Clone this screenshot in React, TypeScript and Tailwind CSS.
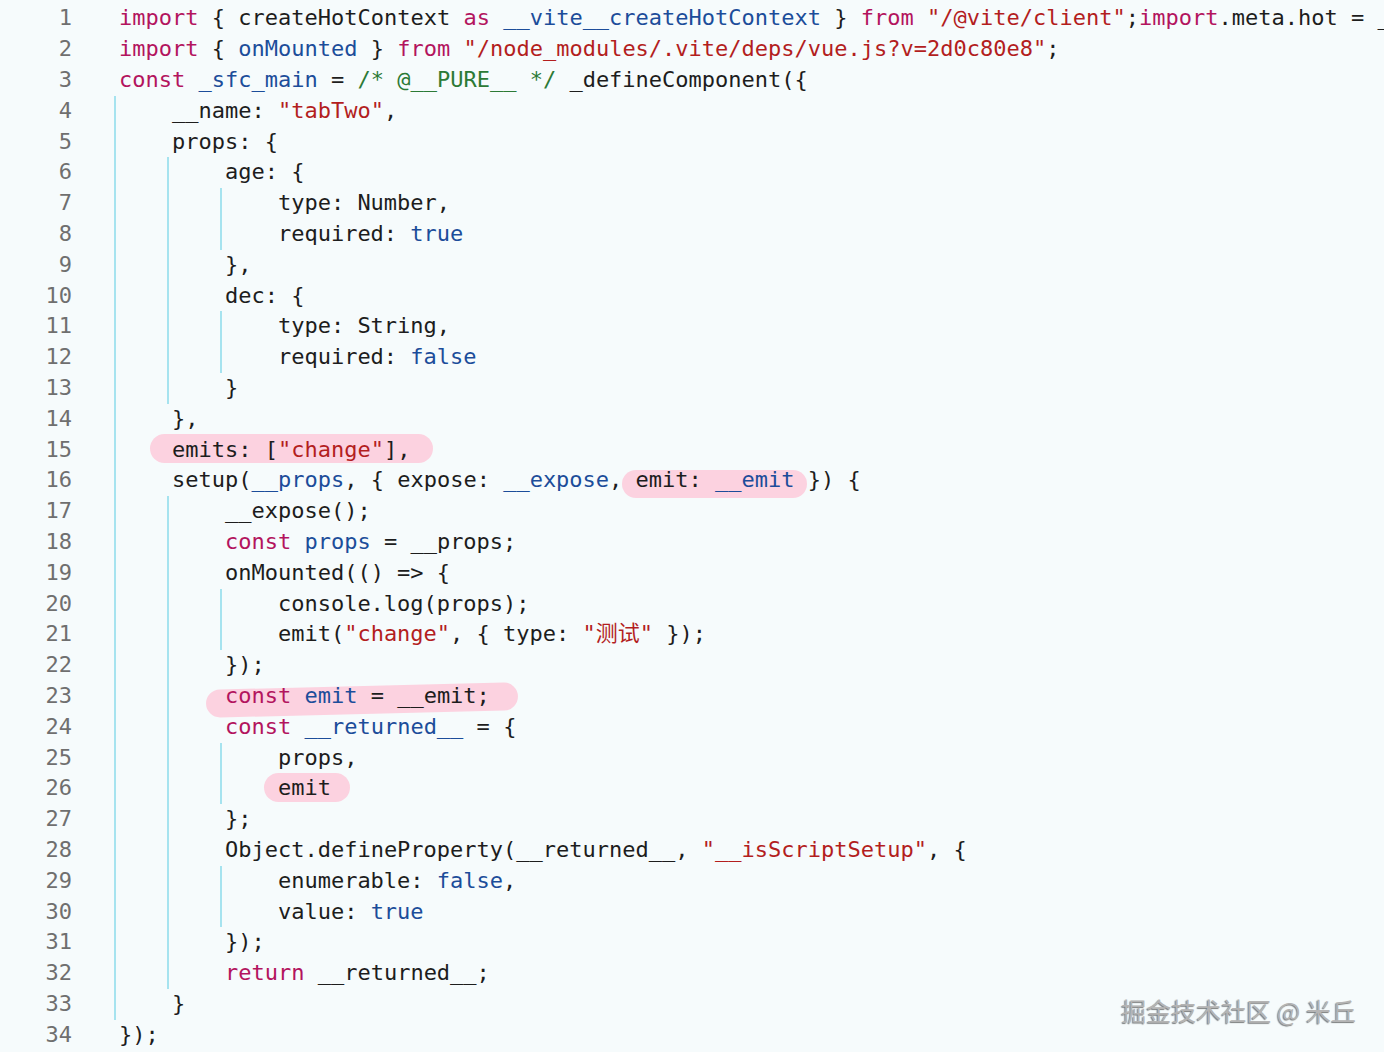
import type { ReactNode } from "react"

const K = ({ children }: { children: ReactNode }) => <span className="text-[#b3145e]">{children}</span>
const B = ({ children }: { children: ReactNode }) => <span className="text-[#1c4d9a]">{children}</span>
const S = ({ children }: { children: ReactNode }) => <span className="text-[#b31e1e]">{children}</span>
const C = ({ children }: { children: ReactNode }) => <span className="text-[#2c7a36]">{children}</span>
const T = ({ children }: { children: ReactNode }) => <span>{children}</span>

// pink marker stroke drawn over a piece of code
const Mark = ({ box, children }: { box: string; children: ReactNode }) => (
  <span className="relative inline-block align-top">
    <span className={`absolute rounded-full bg-[#fcd2e0] ${box}`} />
    <span className="relative">{children}</span>
  </span>
)

const Line = ({ n, indent = 0, children }: { n: number; indent?: number; children: ReactNode }) => (
  <div className="flex h-[30.8px]">
    <span className="w-[72px] shrink-0 text-right text-[#6f6f6f]">{n}</span>
    <div className="pl-[47px] whitespace-pre">
      {Array.from({ length: indent }).map((_, i) => (
        <span
          key={i}
          className="inline-block h-[30.8px] w-[4ch] -ml-[5px] mr-[5px] border-l-2 border-[#a6e3ef] align-top"
        />
      ))}
      {children}
    </div>
  </div>
)

export default function App() {
  return (
    <div className="relative w-[1384px] h-[1052px] overflow-hidden bg-[#f6fbfc] pt-[3.4px] font-['DejaVu_Sans_Mono','Noto_Sans_CJK_SC',monospace] text-[22px] leading-[30.8px] text-[#1d1d1d]">
      <Line n={1}>
        <K>import</K><T> {"{"} createHotContext </T><K>as</K><T> </T><B>__vite__createHotContext</B><T> {"}"} </T><K>from</K><T> </T>
        <S>"/@vite/client"</S><T>;</T><K>import</K><T>.meta.hot = __vite__createHotContext(import.meta.url);</T>
      </Line>
      <Line n={2}>
        <K>import</K><T> {"{"} </T><B>onMounted</B><T> {"}"} </T><K>from</K><T> </T><S>"/node_modules/.vite/deps/vue.js?v=2d0c80e8"</S><T>;</T>
      </Line>
      <Line n={3}>
        <K>const</K><T> </T><B>_sfc_main</B><T> = </T><C>/* @__PURE__ */</C><T> _defineComponent({"{"}</T>
      </Line>
      <Line n={4} indent={1}>
        <T>__name: </T><S>"tabTwo"</S><T>,</T>
      </Line>
      <Line n={5} indent={1}><T>props: {"{"}</T></Line>
      <Line n={6} indent={2}><T>age: {"{"}</T></Line>
      <Line n={7} indent={3}><T>type: Number,</T></Line>
      <Line n={8} indent={3}><T>required: </T><B>true</B></Line>
      <Line n={9} indent={2}><T>{"},"}</T></Line>
      <Line n={10} indent={2}><T>dec: {"{"}</T></Line>
      <Line n={11} indent={3}><T>type: String,</T></Line>
      <Line n={12} indent={3}><T>required: </T><B>false</B></Line>
      <Line n={13} indent={2}><T>{"}"}</T></Line>
      <Line n={14} indent={1}><T>{"},"}</T></Line>
      <Line n={15} indent={1}>
        <Mark box="-left-[22px] -right-[23px] -top-[1px] h-[29px]">
          <T>emits: [</T><S>"change"</S><T>],</T>
        </Mark>
      </Line>
      <Line n={16} indent={1}>
        <T>setup(</T><B>__props</B><T>, {"{"} expose: </T><B>__expose</B><T>,</T>
        <Mark box="left-0 right-[1px] top-[5px] h-[28px]">
          <T> emit: </T><B>__emit</B><T> </T>
        </Mark>
        <T>{"})"} {"{"}</T>
      </Line>
      <Line n={17} indent={2}><T>__expose();</T></Line>
      <Line n={18} indent={2}>
        <K>const</K><T> </T><B>props</B><T> = __props;</T>
      </Line>
      <Line n={19} indent={2}><T>onMounted(() =&gt; {"{"}</T></Line>
      <Line n={20} indent={3}><T>console.log(props);</T></Line>
      <Line n={21} indent={3}>
        <T>emit(</T><S>"change"</S><T>, {"{"} type: </T><S>"测试"</S><T> {"});"}</T>
      </Line>
      <Line n={22} indent={2}><T>{"});"}</T></Line>
      <Line n={23} indent={2}>
        <Mark box="-left-[19px] -right-[28px] top-[5px] h-[28px] -rotate-[1.4deg]">
          <K>const</K><T> </T><B>emit</B><T> = __emit;</T>
        </Mark>
      </Line>
      <Line n={24} indent={2}>
        <K>const</K><T> </T><B>__returned__</B><T> = {"{"}</T>
      </Line>
      <Line n={25} indent={3}><T>props,</T></Line>
      <Line n={26} indent={3}>
        <Mark box="-left-[14px] -right-[19px] top-0 h-[29px]">
          <T>emit</T>
        </Mark>
      </Line>
      <Line n={27} indent={2}><T>{"};"}</T></Line>
      <Line n={28} indent={2}>
        <T>Object.defineProperty(__returned__, </T><S>"__isScriptSetup"</S><T>, {"{"}</T>
      </Line>
      <Line n={29} indent={3}><T>enumerable: </T><B>false</B><T>,</T></Line>
      <Line n={30} indent={3}><T>value: </T><B>true</B></Line>
      <Line n={31} indent={2}><T>{"});"}</T></Line>
      <Line n={32} indent={2}>
        <K>return</K><T> __returned__;</T>
      </Line>
      <Line n={33} indent={1}><T>{"}"}</T></Line>
      <Line n={34}><T>{"});"}</T></Line>

      <div className="absolute right-[28px] bottom-[26px] font-['Noto_Sans_CJK_SC',sans-serif] text-[25px] leading-[32px] text-[#b4b4b4] [text-shadow:-1px_1px_1px_rgba(0,0,0,0.5)]">
        掘金技术社区 @ 米丘
      </div>
    </div>
  )
}
